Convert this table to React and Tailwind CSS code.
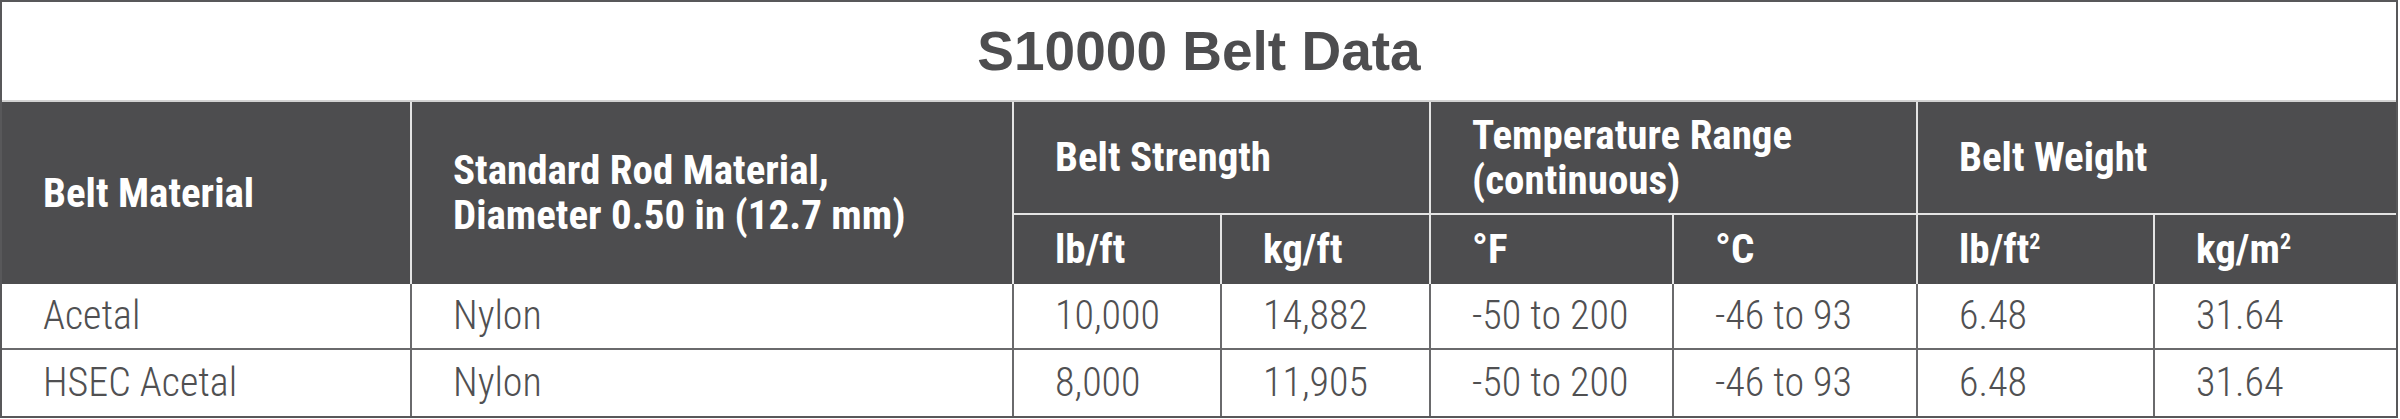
import React from 'react';

const COLS = 'grid grid-cols-[408px_602px_208px_209px_243px_244px_237px_243px]';

const ROWS = [
  ['Acetal', 'Nylon', '10,000', '14,882', '-50 to 200', '-46 to 93', '6.48', '31.64'],
  ['HSEC Acetal', 'Nylon', '8,000', '11,905', '-50 to 200', '-46 to 93', '6.48', '31.64'],
];

const cond = { fontFamily: '"Roboto Condensed", "Liberation Sans", sans-serif' };

function Head({ children, className = '' }) {
  return (
    <div className={`flex items-center pl-[41px] text-[41px] leading-[45px] font-bold ${className}`}>
      <div>{children}</div>
    </div>
  );
}

export default function App() {
  return (
    <div className="w-[2398px] h-[418px] border-2 border-[#58585a] bg-white flex flex-col">
      <div className="h-[100px] shrink-0 border-b-2 border-[#d2d2d2] flex items-center justify-center">
        <h1
          className="text-[55px] font-bold text-[#4d4d4f] leading-none"
          style={{ fontFamily: '"Liberation Sans", Arial, sans-serif' }}
        >
          S10000 Belt Data
        </h1>
      </div>

      <div className={`${COLS} grid-rows-[113px_69px] bg-[#4d4d4f] text-white`} style={cond}>
        <Head className="row-span-2">Belt Material</Head>
        <Head className="row-span-2 border-l-2 border-[#e4e4e4]">
          Standard Rod Material,
          <br />
          Diameter 0.50 in (12.7 mm)
        </Head>
        <Head className="col-span-2 border-l-2 border-b-2 border-[#e4e4e4]">Belt Strength</Head>
        <Head className="col-span-2 border-l-2 border-b-2 border-[#e4e4e4]">
          Temperature Range
          <br />
          (continuous)
        </Head>
        <Head className="col-span-2 border-l-2 border-b-2 border-[#e4e4e4]">Belt Weight</Head>
        <Head className="border-l-2 border-[#e4e4e4]">lb/ft</Head>
        <Head className="border-l-2 border-[#e4e4e4]">kg/ft</Head>
        <Head className="border-l-2 border-[#e4e4e4]">°F</Head>
        <Head className="border-l-2 border-[#e4e4e4]">°C</Head>
        <Head className="border-l-2 border-[#e4e4e4]">
          lb/ft<sup className="text-[22px] top-[-14px]">2</sup>
        </Head>
        <Head className="border-l-2 border-[#e4e4e4]">
          kg/m<sup className="text-[22px] top-[-14px]">2</sup>
        </Head>
      </div>

      {ROWS.map((row, i) => (
        <div
          key={row[0]}
          className={`${COLS} h-[66px] text-[#505052] ${i === 0 ? 'border-b-2 border-[#6a6a6c]' : ''}`}
          style={cond}
        >
          {row.map((cell, j) => (
            <div
              key={j}
              className={`flex items-center pl-[41px] text-[40px] font-light leading-none ${j > 0 ? 'border-l-2 border-[#6a6a6c]' : ''}`}
            >
              {cell}
            </div>
          ))}
        </div>
      ))}
    </div>
  );
}
